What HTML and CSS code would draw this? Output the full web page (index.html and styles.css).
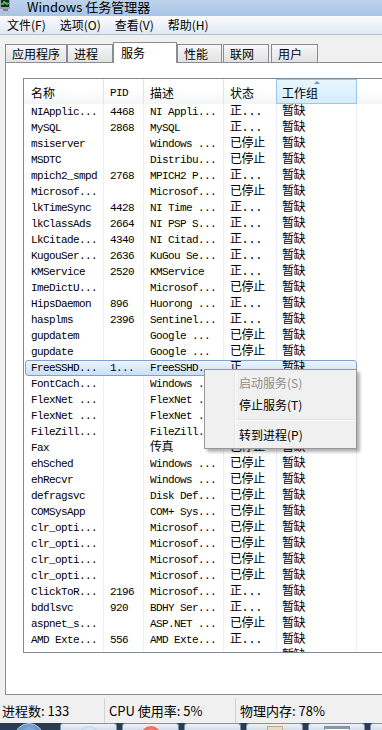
FILE: index.html
```html
<!DOCTYPE html>
<html lang="zh-CN">
<head>
<meta charset="utf-8">
<title>Windows 任务管理器</title>
<link rel="stylesheet" href="styles.css">
</head>
<body>
<div class="window">
  <div class="titlebar">
    <svg class="appicon" viewBox="0 0 11 13" width="11" height="13">
      <rect x="0" y="0" width="10" height="9" fill="#9aa3ad"/>
      <rect x="1" y="0" width="8" height="7" fill="#1f2a24"/>
      <polyline points="1,5 2,3 3,5 4,1 5,4 6,2 7,5 8,3 9,4" fill="none" stroke="#39d84a" stroke-width="1"/>
      <rect x="3" y="9" width="5" height="2" fill="#7d858e"/>
      <rect x="1" y="11" width="9" height="2" fill="#b8c0c8"/>
    </svg>
    <span class="title">Windows 任务管理器</span>
  </div>
  <div class="menubar">
    <span class="menu-item">文件(F)</span>
    <span class="menu-item">选项(O)</span>
    <span class="menu-item">查看(V)</span>
    <span class="menu-item">帮助(H)</span>
  </div>
  <div class="tabs">
    <div class="tab t-apps">应用程序</div>
    <div class="tab t-proc">进程</div>
    <div class="tab t-serv active">服务</div>
    <div class="tab t-perf">性能</div>
    <div class="tab t-net">联网</div>
    <div class="tab t-user">用户</div>
  </div>
  <div class="panel">
    <div class="list">
      <div class="lhead">
        <div class="h">名称</div>
        <div class="h mono">PID</div>
        <div class="h">描述</div>
        <div class="h">状态</div>
        <div class="h sorted">工作组</div>
        <div class="h fill"></div>
      </div>
      <div class="rows">
        <div class="row"><div class="c">NIApplic...</div><div class="c">4468</div><div class="c">NI Appli...</div><div class="c zh">正...</div><div class="c zh">暂缺</div></div>
        <div class="row"><div class="c">MySQL</div><div class="c">2868</div><div class="c">MySQL</div><div class="c zh">正...</div><div class="c zh">暂缺</div></div>
        <div class="row"><div class="c">msiserver</div><div class="c"></div><div class="c">Windows ...</div><div class="c zh">已停止</div><div class="c zh">暂缺</div></div>
        <div class="row"><div class="c">MSDTC</div><div class="c"></div><div class="c">Distribu...</div><div class="c zh">已停止</div><div class="c zh">暂缺</div></div>
        <div class="row"><div class="c">mpich2_smpd</div><div class="c">2768</div><div class="c">MPICH2 P...</div><div class="c zh">正...</div><div class="c zh">暂缺</div></div>
        <div class="row"><div class="c">Microsof...</div><div class="c"></div><div class="c">Microsof...</div><div class="c zh">已停止</div><div class="c zh">暂缺</div></div>
        <div class="row"><div class="c">lkTimeSync</div><div class="c">4428</div><div class="c">NI Time ...</div><div class="c zh">正...</div><div class="c zh">暂缺</div></div>
        <div class="row"><div class="c">lkClassAds</div><div class="c">2664</div><div class="c">NI PSP S...</div><div class="c zh">正...</div><div class="c zh">暂缺</div></div>
        <div class="row"><div class="c">LkCitade...</div><div class="c">4340</div><div class="c">NI Citad...</div><div class="c zh">正...</div><div class="c zh">暂缺</div></div>
        <div class="row"><div class="c">KugouSer...</div><div class="c">2636</div><div class="c">KuGou Se...</div><div class="c zh">正...</div><div class="c zh">暂缺</div></div>
        <div class="row"><div class="c">KMService</div><div class="c">2520</div><div class="c">KMService</div><div class="c zh">正...</div><div class="c zh">暂缺</div></div>
        <div class="row"><div class="c">ImeDictU...</div><div class="c"></div><div class="c">Microsof...</div><div class="c zh">已停止</div><div class="c zh">暂缺</div></div>
        <div class="row"><div class="c">HipsDaemon</div><div class="c">896</div><div class="c">Huorong ...</div><div class="c zh">正...</div><div class="c zh">暂缺</div></div>
        <div class="row"><div class="c">hasplms</div><div class="c">2396</div><div class="c">Sentinel...</div><div class="c zh">正...</div><div class="c zh">暂缺</div></div>
        <div class="row"><div class="c">gupdatem</div><div class="c"></div><div class="c">Google ...</div><div class="c zh">已停止</div><div class="c zh">暂缺</div></div>
        <div class="row"><div class="c">gupdate</div><div class="c"></div><div class="c">Google ...</div><div class="c zh">已停止</div><div class="c zh">暂缺</div></div>
        <div class="row sel"><div class="c">FreeSSHD...</div><div class="c">1...</div><div class="c">FreeSSHD...</div><div class="c zh">正...</div><div class="c zh">暂缺</div></div>
        <div class="row"><div class="c">FontCach...</div><div class="c"></div><div class="c">Windows ...</div><div class="c zh">已停止</div><div class="c zh">暂缺</div></div>
        <div class="row"><div class="c">FlexNet ...</div><div class="c"></div><div class="c">FlexNet ...</div><div class="c zh">已停止</div><div class="c zh">暂缺</div></div>
        <div class="row"><div class="c">FlexNet ...</div><div class="c"></div><div class="c">FlexNet ...</div><div class="c zh">已停止</div><div class="c zh">暂缺</div></div>
        <div class="row"><div class="c">FileZill...</div><div class="c"></div><div class="c">FileZill...</div><div class="c zh">已停止</div><div class="c zh">暂缺</div></div>
        <div class="row"><div class="c">Fax</div><div class="c"></div><div class="c zh">传真</div><div class="c zh">已停止</div><div class="c zh">暂缺</div></div>
        <div class="row"><div class="c">ehSched</div><div class="c"></div><div class="c">Windows ...</div><div class="c zh">已停止</div><div class="c zh">暂缺</div></div>
        <div class="row"><div class="c">ehRecvr</div><div class="c"></div><div class="c">Windows ...</div><div class="c zh">已停止</div><div class="c zh">暂缺</div></div>
        <div class="row"><div class="c">defragsvc</div><div class="c"></div><div class="c">Disk Def...</div><div class="c zh">已停止</div><div class="c zh">暂缺</div></div>
        <div class="row"><div class="c">COMSysApp</div><div class="c"></div><div class="c">COM+ Sys...</div><div class="c zh">已停止</div><div class="c zh">暂缺</div></div>
        <div class="row"><div class="c">clr_opti...</div><div class="c"></div><div class="c">Microsof...</div><div class="c zh">已停止</div><div class="c zh">暂缺</div></div>
        <div class="row"><div class="c">clr_opti...</div><div class="c"></div><div class="c">Microsof...</div><div class="c zh">已停止</div><div class="c zh">暂缺</div></div>
        <div class="row"><div class="c">clr_opti...</div><div class="c"></div><div class="c">Microsof...</div><div class="c zh">已停止</div><div class="c zh">暂缺</div></div>
        <div class="row"><div class="c">clr_opti...</div><div class="c"></div><div class="c">Microsof...</div><div class="c zh">已停止</div><div class="c zh">暂缺</div></div>
        <div class="row"><div class="c">ClickToR...</div><div class="c">2196</div><div class="c">Microsof...</div><div class="c zh">正...</div><div class="c zh">暂缺</div></div>
        <div class="row"><div class="c">bddlsvc</div><div class="c">920</div><div class="c">BDHY Ser...</div><div class="c zh">正...</div><div class="c zh">暂缺</div></div>
        <div class="row"><div class="c">aspnet_s...</div><div class="c"></div><div class="c">ASP.NET ...</div><div class="c zh">已停止</div><div class="c zh">暂缺</div></div>
        <div class="row"><div class="c">AMD Exte...</div><div class="c">556</div><div class="c">AMD Exte...</div><div class="c zh">正...</div><div class="c zh">暂缺</div></div>
        <div class="row"><div class="c"></div><div class="c"></div><div class="c"></div><div class="c"></div><div class="c zh">暂缺</div></div>
      </div>
    </div>
  </div>
  <div class="status">
    <div class="st st-proc">进程数: 133</div>
    <div class="st st-cpu">CPU 使用率: 5%</div>
    <div class="st st-mem">物理内存: 78%</div>
  </div>
  <div class="taskbar">
    <div class="orb"></div>
    <div class="tb"><span class="ico ico-ie"></span></div>
    <div class="tb"><span class="ico ico-red"></span></div>
    <div class="tb"></div>
    <div class="tb"><span class="ico ico-doc"></span></div>
    <div class="tb"><span class="ico ico-win"></span></div>
    <div class="tb"></div>
  </div>
</div>

<div class="ctx">
  <div class="mi disabled">启动服务(S)</div>
  <div class="mi">停止服务(T)</div>
  <div class="msep"></div>
  <div class="mi">转到进程(P)</div>
</div>
</body>
</html>
```

FILE: styles.css
```css
html, body {
  margin: 0;
  padding: 0;
}
body {
  width: 382px;
  height: 730px;
  overflow: hidden;
  position: relative;
  background: #f0f0f0;
  color: #000;
  font-family: "Noto Sans CJK SC", "Noto Sans", sans-serif;
}
.window {
  width: 430px;
  display: flex;
  flex-direction: column;
}

/* title bar */
.titlebar {
  height: 16px;
  display: flex;
  align-items: flex-start;
  overflow: hidden;
  background: linear-gradient(#bdd3eb, #a8c4e5);
}
.appicon {
  flex: none;
  display: block;
}
.title {
  margin-left: 16px;
  font-size: 13px;
  line-height: 13px;
  white-space: nowrap;
}

/* menu bar */
.menubar {
  height: 18px;
  display: flex;
  font-size: 12px;
  line-height: 18px;
  border-bottom: 1px solid #b6bfcc;
  background: linear-gradient(#fbfcfe, #e0e8f4);
}
.menu-item {
  padding: 0 7px;
  white-space: nowrap;
}

/* tabs */
.tabs {
  height: 20px;
  margin-top: 7px;
  padding-left: 5px;
  display: flex;
  align-items: flex-end;
  position: relative;
  z-index: 1;
  font-size: 12px;
}
.tab {
  box-sizing: border-box;
  height: 18px;
  padding: 1px 0 0 6px;
  line-height: 16px;
  white-space: nowrap;
  border: 1px solid #898c95;
  border-bottom: none;
  background: linear-gradient(#f7f7f7, #e2e2e2);
}
.tab.active {
  height: 21px;
  margin-bottom: -1px;
  padding: 1px 0 0 7px;
  line-height: 18px;
  background: #fff;
}
.t-apps { width: 62px; }
.t-proc { width: 46px; }
.t-serv { width: 64px; }
.t-perf { width: 45px; }
.t-net { width: 46px; margin-left: 1px; }
.t-user { width: 47px; margin-left: 2px; }

/* panel */
.panel {
  box-sizing: border-box;
  height: 633px;
  margin-left: 5px;
  padding: 15px 0 0 17px;
  border: 1px solid #898c95;
  background: #fff;
}
.list {
  box-sizing: border-box;
  height: 575px;
  border: 1px solid #828790;
  overflow: hidden;
  background: #fff;
}

/* header */
.lhead {
  display: grid;
  grid-template-columns: 80px 40px 80px 53px 80px 1fr;
  height: 25px;
  background: linear-gradient(#ffffff 0%, #ffffff 45%, #f3f4f6 100%);
}
.h {
  box-sizing: border-box;
  position: relative;
  padding: 4px 0 0 6px;
  font-size: 12px;
  line-height: 20px;
  white-space: nowrap;
  border-right: 1px solid #e1e3e7;
}
.h:first-child {
  padding-left: 7px;
}
.h.mono {
  font-family: "Liberation Mono", monospace;
  font-size: 11px;
  letter-spacing: -0.6px;
}
.h.sorted {
  padding-left: 5px;
  border-right-color: #96c9ef;
  background: linear-gradient(#e9f6fd, #d5ebf9);
  box-shadow: -1px 0 0 #96c9ef, inset 0 1px 0 #96c9ef, inset 0 -1px 0 #96c9ef;
}
.h.sorted::before {
  content: "";
  position: absolute;
  left: 37px;
  top: 2px;
  border-left: 3px solid transparent;
  border-right: 3px solid transparent;
  border-bottom: 3px solid #6b97c5;
}
.h.fill {
  border-right: none;
}

/* rows */
.rows {
  height: 548px;
  overflow: hidden;
}
.row {
  display: grid;
  grid-template-columns: 80px 40px 80px 53px 80px;
  height: 16px;
  position: relative;
  z-index: 0;
  font-family: "Liberation Mono", "Noto Sans CJK SC", monospace;
  font-size: 11px;
  letter-spacing: -0.6px;
  line-height: 16px;
}
.c {
  box-sizing: border-box;
  padding-left: 6px;
  white-space: nowrap;
  overflow: hidden;
  border-right: 1px solid #eceff3;
}
.c:first-child {
  padding-left: 7px;
}
.c.zh {
  font-size: 12px;
  letter-spacing: -0.4px;
}
.c.zh:last-child {
  padding-left: 5px;
}
.row.sel .c {
  border-right-color: transparent;
}
.row.sel::before {
  content: "";
  position: absolute;
  left: 1px;
  top: 0;
  width: 332px;
  height: 16px;
  box-sizing: border-box;
  z-index: -1;
  border: 1px solid #7da2ce;
  border-radius: 3px;
  background: linear-gradient(#edf5fe, #c9def8);
}

/* status bar */
.status {
  height: 28px;
  display: flex;
  font-size: 13px;
}
.st {
  box-sizing: border-box;
  height: 25px;
  margin-top: 3px;
  padding-top: 2px;
  line-height: 22px;
  white-space: nowrap;
}
.st-proc {
  width: 104px;
  padding-left: 2px;
}
.st-cpu {
  width: 131px;
  padding-left: 4px;
  border-left: 1px solid #d2d2d2;
}
.st-mem {
  padding-left: 4px;
  border-left: 1px solid #d2d2d2;
}

/* taskbar */
.taskbar {
  height: 8px;
  display: flex;
  gap: 5px;
  overflow: hidden;
  background: #2b3b52;
}
.orb {
  flex: none;
  width: 30px;
  height: 30px;
  margin: 0 11px 0 14px;
  box-sizing: border-box;
  border: 1px solid #b7d1ee;
  border-radius: 50%;
  background: radial-gradient(circle at 50% 30%, #8fb6e0, #2f5f9a);
}
.tb {
  flex: none;
  width: 57px;
  height: 10px;
  box-sizing: border-box;
  display: flex;
  justify-content: center;
  border: 1px solid #7f93aa;
  border-bottom: none;
  border-radius: 3px 3px 0 0;
  background: linear-gradient(#eef2f7, #c9d4e0);
}
.ico {
  display: block;
  margin-top: 2px;
}
.ico-ie {
  width: 20px;
  height: 20px;
  border-radius: 50%;
  background: radial-gradient(circle at 50% 40%, #ffffff, #8fb0d4);
}
.ico-red {
  width: 20px;
  height: 20px;
  border-radius: 50%;
  background: radial-gradient(circle at 50% 30%, #ff8a7a, #d92c1e);
}
.ico-doc {
  width: 14px;
  height: 12px;
  background: #e6dcc4;
  border: 1px solid #b9ad8f;
}
.ico-win {
  width: 26px;
  height: 14px;
  box-sizing: border-box;
  border: 1px solid #8a96a5;
  border-top-width: 3px;
  background: #f5f7fa;
}

/* context menu */
.ctx {
  position: absolute;
  left: 204px;
  top: 369px;
  width: 153px;
  box-sizing: border-box;
  padding: 2px;
  border: 1px solid #979797;
  background: #f0f0f0;
  box-shadow: 3px 3px 3px rgba(0, 0, 0, 0.3);
  font-size: 12px;
}
.ctx::before {
  content: "";
  position: absolute;
  left: 29px;
  top: 2px;
  bottom: 2px;
  width: 1px;
  background: #e2e3e3;
  box-shadow: 1px 0 0 #ffffff;
}
.mi {
  height: 22px;
  line-height: 22px;
  padding-left: 32px;
  white-space: nowrap;
  color: #000;
}
.mi.disabled {
  color: #8d8d8d;
}
.msep {
  height: 1px;
  margin: 3px 0 4px 28px;
  background: #e0e0e0;
  box-shadow: 0 1px 0 #ffffff;
}
```
